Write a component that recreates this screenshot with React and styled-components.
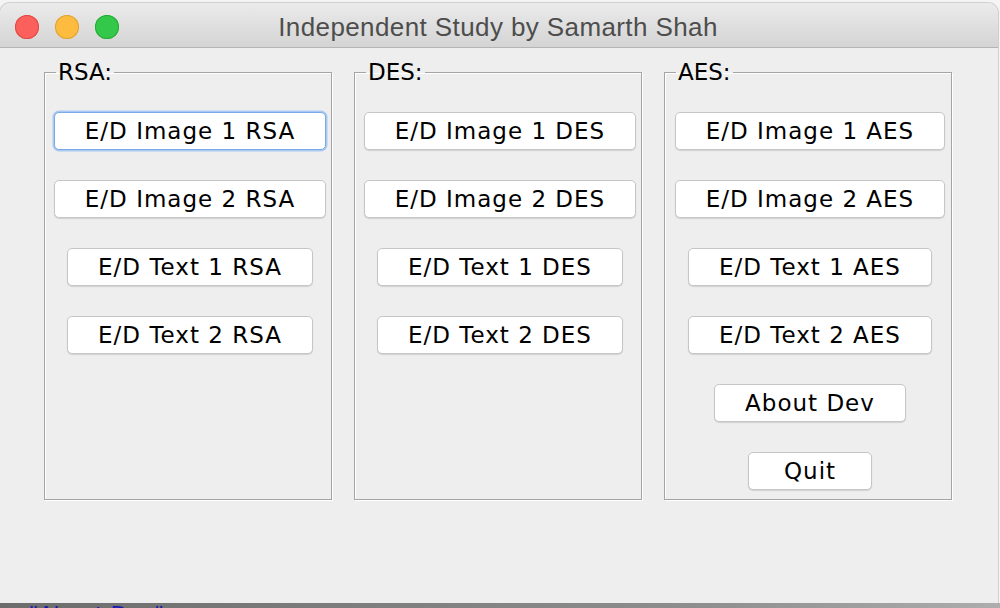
import React from "react";
import styled, { createGlobalStyle } from "styled-components";

const GlobalStyle = createGlobalStyle`
  html, body {
    margin: 0;
    padding: 0;
    background: #f4f4f4;
  }
  body {
    font-family: "DejaVu Sans", "Liberation Sans", sans-serif;
  }
`;

const panels = [
  {
    title: "RSA:",
    buttons: [
      { label: "E/D Image 1 RSA", focused: true },
      { label: "E/D Image 2 RSA" },
      { label: "E/D Text 1 RSA" },
      { label: "E/D Text 2 RSA" },
    ],
  },
  {
    title: "DES:",
    buttons: [
      { label: "E/D Image 1 DES" },
      { label: "E/D Image 2 DES" },
      { label: "E/D Text 1 DES" },
      { label: "E/D Text 2 DES" },
    ],
  },
  {
    title: "AES:",
    buttons: [
      { label: "E/D Image 1 AES" },
      { label: "E/D Image 2 AES" },
      { label: "E/D Text 1 AES" },
      { label: "E/D Text 2 AES" },
      { label: "About Dev" },
      { label: "Quit" },
    ],
  },
];

const App = () => {
  return (
    <Desktop>
      <GlobalStyle />
      <Window>
        <TitleBar>
          <Lights>
            <Light color="#fc605c" edge="#de4a45" />
            <Light color="#fdbc40" edge="#dea236" />
            <Light color="#34c84a" edge="#27aa35" />
          </Lights>
          <Title>Independent Study by Samarth Shah</Title>
        </TitleBar>
        <Content>
          {panels.map((p) => (
            <Panel key={p.title}>
              <Legend>{p.title}</Legend>
              <ButtonColumn>
                {p.buttons.map((b) => (
                  <Button key={b.label} focused={b.focused}>
                    {b.label}
                  </Button>
                ))}
              </ButtonColumn>
            </Panel>
          ))}
        </Content>
      </Window>
      <BehindStrip>
        <Code>
          <span>&lt;</span>
          <Quote>"About Dev"</Quote>
          <span>&gt;</span>
        </Code>
      </BehindStrip>
    </Desktop>
  );
};

const Desktop = styled.div`
  width: 1000px;
  height: 608px;
  display: flex;
  flex-direction: column;
  overflow: hidden;
  padding-top: 3px;
  box-sizing: border-box;
`;

const Window = styled.div`
  width: 998px;
  height: 600px;
  display: flex;
  flex-direction: column;
  border-radius: 10px 10px 0 0;
  overflow: hidden;
  background: #eeeeee;
  box-shadow: 0 0 0 1px #cfcfcf;
`;

const TitleBar = styled.div`
  position: relative;
  height: 44px;
  flex: none;
  display: flex;
  align-items: center;
  justify-content: center;
  background: linear-gradient(#ebebeb, #d4d4d4);
  border-bottom: 1px solid #b4b4b4;
`;

const Lights = styled.div`
  position: absolute;
  left: 15px;
  top: 12px;
  display: flex;
  gap: 16px;
`;

const Light = styled.span`
  width: 24px;
  height: 24px;
  border-radius: 50%;
  background: ${(p) => p.color};
  box-shadow: inset 0 0 0 1px ${(p) => p.edge};
`;

const Title = styled.div`
  font-family: "Liberation Sans", "Noto Sans", sans-serif;
  font-size: 26px;
  letter-spacing: 0.4px;
  color: #4d4d4d;
  margin-left: -2px;
  margin-top: 4px;
`;

const Content = styled.div`
  flex: 1;
  display: flex;
  gap: 22px;
  padding: 11px 0 0 44px;
`;

const Panel = styled.fieldset`
  margin: 0;
  width: 288px;
  height: 441px;
  box-sizing: border-box;
  padding: 27px 0 0 4px;
  border: 1px solid #a4a4a4;
  box-shadow: 1px 1px 0 #ffffff, inset 1px 1px 0 #ffffff;
`;

const Legend = styled.legend`
  margin-left: 7px;
  padding: 0 2px;
  font-size: 23px;
  line-height: 26px;
  color: #000;
`;

const ButtonColumn = styled.div`
  display: flex;
  flex-direction: column;
  align-items: center;
  gap: 30px;
`;

const Button = styled.button`
  height: 38px;
  min-width: 124px;
  box-sizing: border-box;
  padding: 0 30px;
  font-family: "DejaVu Sans", sans-serif;
  font-size: 23px;
  letter-spacing: 1px;
  color: #000;
  background: #ffffff;
  border: 1px solid ${(p) => (p.focused ? "#7aa9e6" : "#c6c6c6")};
  border-radius: 5px;
  box-shadow: ${(p) =>
    p.focused
      ? "0 0 0 1.5px #a9c9f3"
      : "0 1px 1px rgba(0, 0, 0, 0.12)"};
`;

const BehindStrip = styled.div`
  height: 5px;
  flex: none;
  background: linear-gradient(90deg, #6c6c6c, #8e8e8e 70%, #adadad);
  overflow: hidden;
  padding-left: 10px;
`;

const Code = styled.div`
  font-family: "DejaVu Sans", sans-serif;
  font-size: 22px;
  line-height: 22px;
  margin-top: 1px;
  color: #111;
`;

const Quote = styled.span`
  color: #1a1ab0;
`;

export default App;
